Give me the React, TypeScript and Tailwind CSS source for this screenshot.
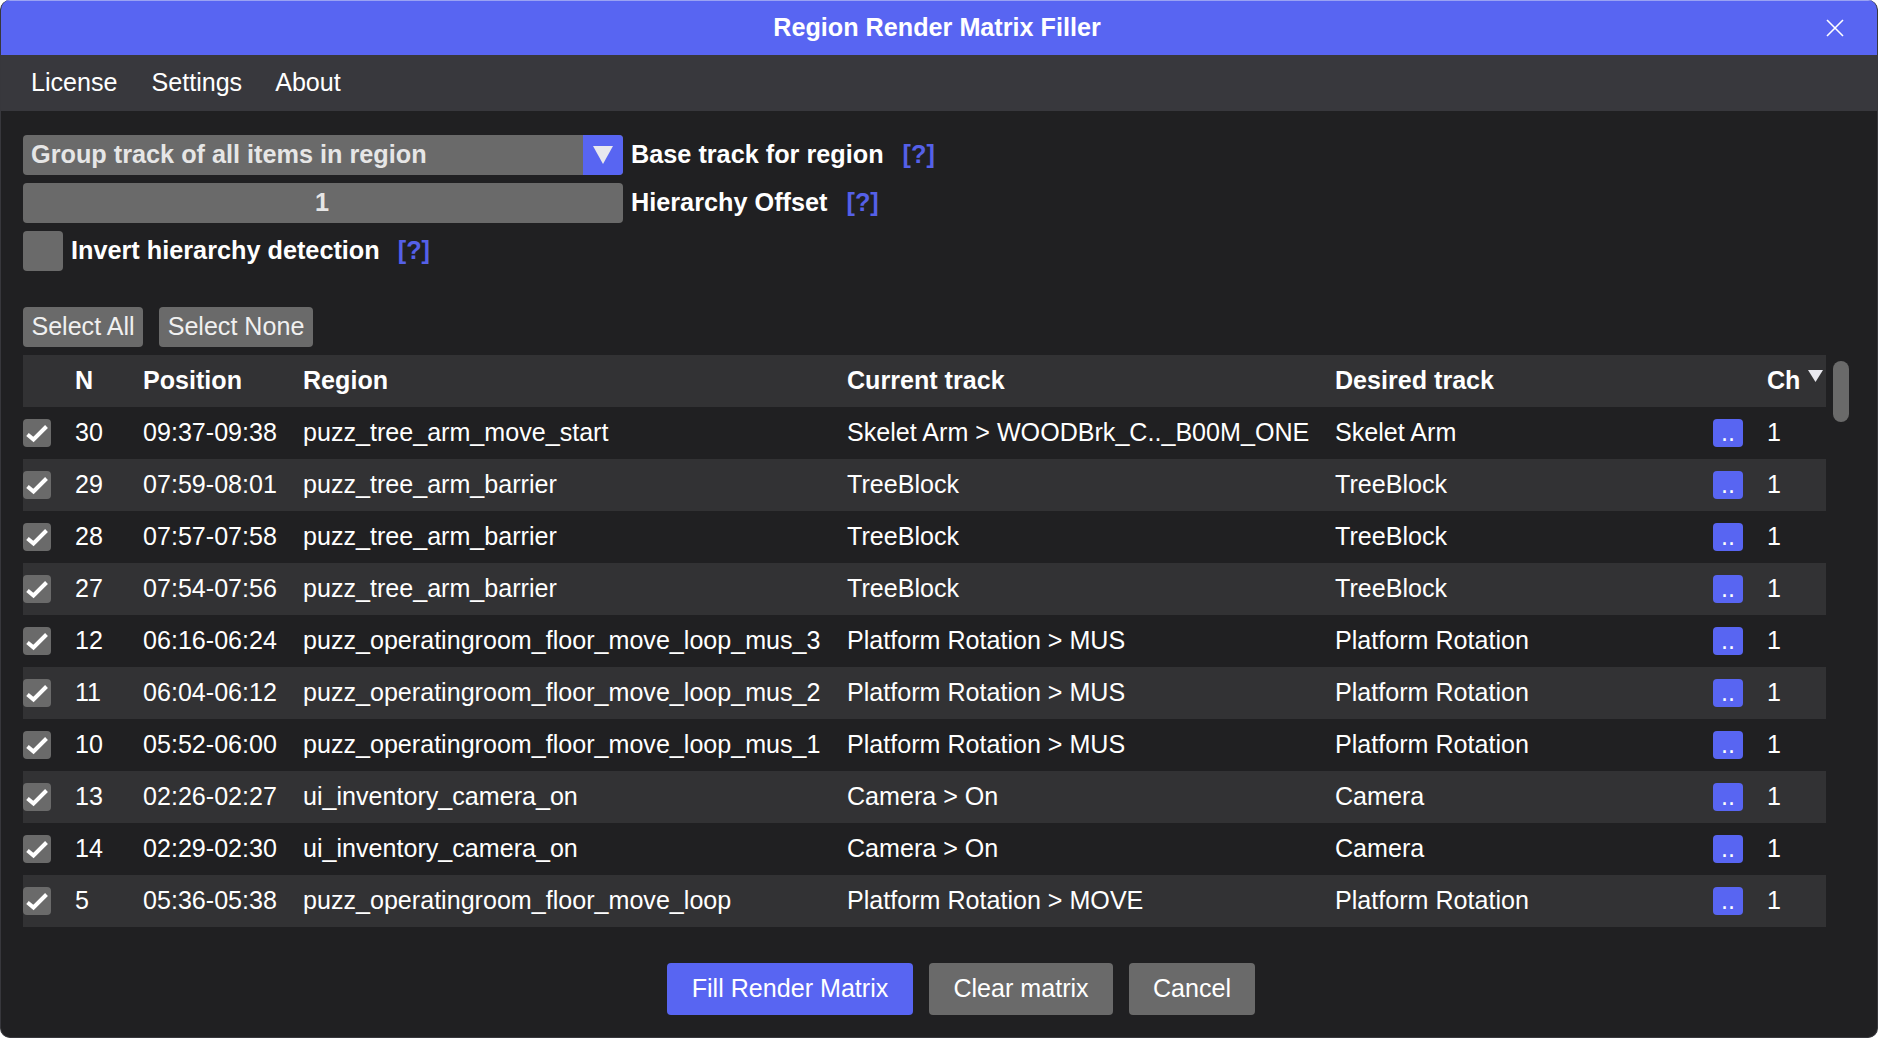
import React from 'react';

const FONT = "font-['Liberation_Sans',Arial,sans-serif]";

const ROWS = [
  { n: 30, pos: '09:37-09:38', region: 'puzz_tree_arm_move_start', current: 'Skelet Arm > WOODBrk_C.._B00M_ONE', desired: 'Skelet Arm' },
  { n: 29, pos: '07:59-08:01', region: 'puzz_tree_arm_barrier', current: 'TreeBlock', desired: 'TreeBlock' },
  { n: 28, pos: '07:57-07:58', region: 'puzz_tree_arm_barrier', current: 'TreeBlock', desired: 'TreeBlock' },
  { n: 27, pos: '07:54-07:56', region: 'puzz_tree_arm_barrier', current: 'TreeBlock', desired: 'TreeBlock' },
  { n: 12, pos: '06:16-06:24', region: 'puzz_operatingroom_floor_move_loop_mus_3', current: 'Platform Rotation > MUS', desired: 'Platform Rotation' },
  { n: 11, pos: '06:04-06:12', region: 'puzz_operatingroom_floor_move_loop_mus_2', current: 'Platform Rotation > MUS', desired: 'Platform Rotation' },
  { n: 10, pos: '05:52-06:00', region: 'puzz_operatingroom_floor_move_loop_mus_1', current: 'Platform Rotation > MUS', desired: 'Platform Rotation' },
  { n: 13, pos: '02:26-02:27', region: 'ui_inventory_camera_on', current: 'Camera > On', desired: 'Camera' },
  { n: 14, pos: '02:29-02:30', region: 'ui_inventory_camera_on', current: 'Camera > On', desired: 'Camera' },
  { n: 5, pos: '05:36-05:38', region: 'puzz_operatingroom_floor_move_loop', current: 'Platform Rotation > MOVE', desired: 'Platform Rotation' },
];

const COLS = 'grid grid-cols-[52px_68px_160px_544px_488px_378px_54px_59px] items-center h-[52px]';

function Help() {
  return <span className="text-[#5560e8] font-bold">[?]</span>;
}

function CheckBox() {
  return (
    <div className="w-7 h-7 rounded-[4px] bg-[#6a6a6a] flex items-center justify-center">
      <svg viewBox="0 0 28 28" className="w-7 h-7">
        <path d="M4.5 15.5 L10.5 20.5 L23.5 7.5" fill="none" stroke="#fff" strokeWidth="4" />
      </svg>
    </div>
  );
}

export default function App() {
  return (
    <div className={`${FONT} h-screen w-full bg-white text-[25.1px] leading-none text-white`}>
      <div className="h-full flex flex-col rounded-[10px] overflow-hidden bg-[#202022] border-x border-b border-[#37373c]">
        {/* Title bar */}
        <div className="h-[55px] -mx-px shrink-0 relative flex items-center justify-center pr-1 bg-[#5865f2] border-t border-[#9aa2f3] font-bold text-[25.2px]">
          Region Render Matrix Filler
          <svg viewBox="0 0 18 18" className="absolute right-[34px] top-[18px] w-[18px] h-[18px]">
            <path d="M1 1 L17 17 M17 1 L1 17" stroke="#fff" strokeWidth="1.6" fill="none" />
          </svg>
        </div>

        {/* Menu */}
        <div className="h-14 shrink-0 flex items-center gap-[34px] pl-[30px] bg-[#38383d]">
          <span>License</span>
          <span>Settings</span>
          <span className="-ml-px">About</span>
        </div>

        <div className="flex-1 flex flex-col pt-6 pl-[22px]">
          {/* Options */}
          <div className="flex flex-col gap-2 font-bold text-[25.25px]">
            <div className="flex items-center h-10">
              <div className="w-[600px] h-10 flex rounded-[4px] overflow-hidden bg-[#6a6a6a]">
                <div className="flex-1 flex items-center pl-2 text-[#e6e6e6]">Group track of all items in region</div>
                <div className="w-10 flex items-center justify-center bg-[#5865f2]">
                  <svg viewBox="0 0 20 18" className="w-5 h-[18px]">
                    <path d="M0 0 H20 L10 18 Z" fill="#e8e8ee" />
                  </svg>
                </div>
              </div>
              <span className="ml-2">Base track for region</span>
              <span className="ml-[19px]"><Help /></span>
            </div>
            <div className="flex items-center h-10">
              <div className="w-[600px] h-10 flex items-center justify-center pr-0.5 rounded-[4px] bg-[#6a6a6a] text-[#e6e6e6]">1</div>
              <span className="ml-2">Hierarchy Offset</span>
              <span className="ml-[19px]"><Help /></span>
            </div>
            <div className="flex items-center h-10">
              <div className="w-10 h-10 rounded-[4px] bg-[#6a6a6a]" />
              <span className="ml-2">Invert hierarchy detection</span>
              <span className="ml-[18px]"><Help /></span>
            </div>
          </div>

          {/* Select buttons */}
          <div className="flex gap-4 mt-9">
            <div className="w-[120px] h-10 flex items-center justify-center rounded-[4px] bg-[#6a6a6a] text-[#f0f0f0]">Select All</div>
            <div className="w-[154px] h-10 flex items-center justify-center rounded-[4px] bg-[#6a6a6a] text-[#f0f0f0]">Select None</div>
          </div>

          {/* Table */}
          <div className="flex mt-2">
            <div className="w-[1803px]">
              <div className={`${COLS} bg-[#323234] font-bold`}>
                <span />
                <span>N</span>
                <span>Position</span>
                <span>Region</span>
                <span>Current track</span>
                <span>Desired track</span>
                <span />
                <div className="flex items-center">
                  <span>Ch</span>
                  <svg viewBox="0 0 15 12" className="w-[15px] h-3 ml-2 -mt-2.5">
                    <path d="M0 0 H15 L7.5 12 Z" fill="#e8e8ee" />
                  </svg>
                </div>
              </div>
              {ROWS.map((row, idx) => (
                <div key={idx} className={`${COLS} ${idx % 2 === 1 ? 'bg-[#323234]' : ''}`}>
                  <CheckBox />
                  <span>{row.n}</span>
                  <span>{row.pos}</span>
                  <span>{row.region}</span>
                  <span>{row.current}</span>
                  <span>{row.desired}</span>
                  <div className="w-[30px] h-7 rounded-[4px] bg-[#5865f2] flex items-end justify-center pb-0.5">..</div>
                  <span>1</span>
                </div>
              ))}
            </div>
            {/* Scrollbar */}
            <div className="ml-[7px] mt-1.5 w-4 h-[61px] rounded-full bg-[#6a6a6a]" />
          </div>

          {/* Footer */}
          <div className="flex justify-center gap-4 mt-9 pl-[22px]">
            <div className="w-[246px] h-[52px] flex items-center justify-center rounded-[4px] bg-[#5865f2]">Fill Render Matrix</div>
            <div className="w-[184px] h-[52px] flex items-center justify-center rounded-[4px] bg-[#6a6a6a]">Clear matrix</div>
            <div className="w-[126px] h-[52px] flex items-center justify-center rounded-[4px] bg-[#6a6a6a]">Cancel</div>
          </div>
        </div>
      </div>
    </div>
  );
}
